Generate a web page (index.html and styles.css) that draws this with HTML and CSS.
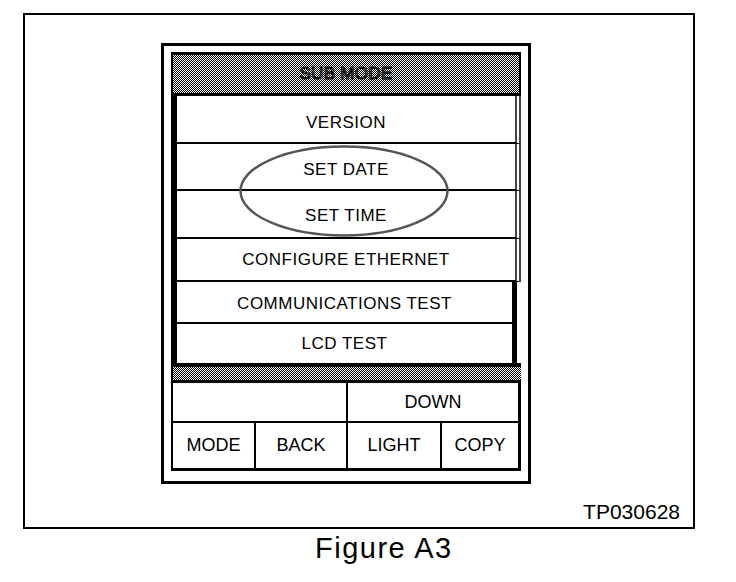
FILE: index.html
```html
<html>
	<head>
		<meta charset="UTF-8" />
		<title>Figure A3</title>
		<link rel="stylesheet" href="styles.css">
	</head>
	<body>
		<div class="figure">
			<div class="device">
				<div class="screen">
					<div class="title">SUB MODE</div>
					<div class="menu">
						<div class="item r1">VERSION</div>
						<div class="item r2">SET DATE</div>
						<div class="item r3">SET TIME</div>
						<div class="item r4">CONFIGURE ETHERNET</div>
						<div class="item r5 solid">COMMUNICATIONS TEST</div>
						<div class="item r6 solid">LCD TEST</div>
						<svg class="oval" width="210" height="92" viewBox="0 0 210 92">
							<ellipse cx="105" cy="46" rx="103.5" ry="44.5" fill="none" stroke="#555" stroke-width="2.5"/>
						</svg>
					</div>
					<div class="band"></div>
				</div>
				<div class="keys">
					<div class="key half"></div>
					<div class="key half">DOWN</div>
					<div class="key">MODE</div>
					<div class="key">BACK</div>
					<div class="key">LIGHT</div>
					<div class="key">COPY</div>
				</div>
			</div>
			<div class="tag">TP030628</div>
		</div>
		<div class="caption">Figure A3</div>
	</body>
</html>
```

FILE: styles.css
```css
body { margin: 0; background: #fff; color: #000; font-family: "Liberation Sans", Arial, sans-serif; }

.figure { box-sizing: border-box; width: 672px; height: 516px; margin: 13px 0 0 23px;
	border: 2px solid #000; display: flex; flex-direction: column; }
.device { box-sizing: border-box; width: 370px; height: 441px; margin: 28px 0 0 136px;
	border: 3px solid #000; padding: 6px 7px 10px; }

.title, .band { background: repeating-conic-gradient(#000 0 25%, #fff 0 50%) 0 0 / 2px 2px; }
.title { height: 38px; border: solid #000; border-width: 3px 2px 0; display: flex;
	align-items: center; justify-content: center; font-size: 17px; letter-spacing: 0.3px;
	color: transparent; -webkit-text-stroke: 1px #000; }
.band { height: 13px; border-left: 2px solid #000; }

.menu { position: relative; border: solid #000; border-width: 3px 0 4px 6px; }
.item { display: flex; align-items: center; justify-content: center; font-size: 17px; letter-spacing: 0.5px;
	border-bottom: 2px solid #000; border-right: 6px double #444; }
.item.solid { border-right: 5px solid #000; margin-right: 4px; }
.r1 { height: 38px; padding-top: 8px; }
.r2 { height: 39px; padding-top: 6px; }
.r3 { height: 43px; padding-top: 3px; }
.r4 { height: 41px; }
.r5 { height: 37px; padding-top: 3px; }
.r6 { height: 39px; border-bottom: 0; }
.oval { position: absolute; left: 62px; top: 49px; }

.keys { display: grid; grid-template-columns: 81px 90px 92px 1fr; grid-template-rows: 38px 45px;
	gap: 2px; background: #000; border: solid #000; border-width: 3px 3px 3px 2px; }
.key { background: #fff; display: flex; align-items: center; justify-content: center; font-size: 18px; }
.key.half { grid-column: span 2; }

.tag { margin-top: auto; align-self: flex-end; margin-right: 13px; padding-bottom: 3px;
	font-size: 21px; line-height: 24px; }
.caption { margin: 3px 0 0 315px; font-size: 29px; line-height: 33px; letter-spacing: 1.5px; }
```
